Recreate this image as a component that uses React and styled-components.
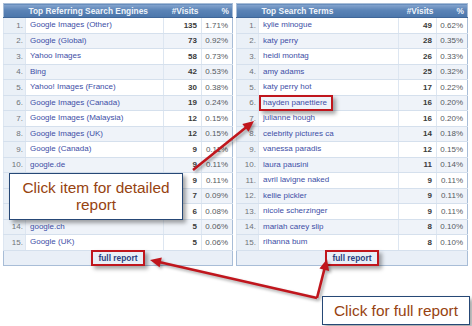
import React from 'react';
import styled, { createGlobalStyle } from 'styled-components';

// rows 11-13 sit under the callout in the screenshot, so their names stay blank
const engines = [
  ['Google Images (Other)', 135, '1.71%'],
  ['Google (Global)', 73, '0.92%'],
  ['Yahoo Images', 58, '0.73%'],
  ['Bing', 42, '0.53%'],
  ['Yahoo! Images (France)', 30, '0.38%'],
  ['Google Images (Canada)', 19, '0.24%'],
  ['Google Images (Malaysia)', 12, '0.15%'],
  ['Google Images (UK)', 12, '0.15%'],
  ['Google (Canada)', 9, '0.11%'],
  ['google.de', 9, '0.11%'],
  ['', 9, '0.11%'],
  ['', 7, '0.09%'],
  ['', 6, '0.08%'],
  ['google.ch', 5, '0.06%'],
  ['Google (UK)', 5, '0.06%'],
];

const terms = [
  ['kylie minogue', 49, '0.62%'],
  ['katy perry', 28, '0.35%'],
  ['heidi montag', 26, '0.33%'],
  ['amy adams', 25, '0.32%'],
  ['katy perry hot', 17, '0.22%'],
  ['hayden panettiere', 16, '0.20%'],
  ['julianne hough', 16, '0.20%'],
  ['celebrity pictures ca', 14, '0.18%'],
  ['vanessa paradis', 12, '0.15%'],
  ['laura pausini', 11, '0.14%'],
  ['avril lavigne naked', 9, '0.11%'],
  ['kellie pickler', 9, '0.11%'],
  ['nicole scherzinger', 9, '0.11%'],
  ['mariah carey slip', 8, '0.10%'],
  ['rihanna bum', 8, '0.10%'],
];

const RED = '#c0161d';

const ReportTable = ({ title, rows, highlightRow }) => (
  <Table>
    <colgroup>
      <col style={{ width: 22 }} />
      <col />
      <col style={{ width: 38 }} />
      <col style={{ width: 31 }} />
    </colgroup>
    <thead>
      <tr>
        <Th />
        <Th $align="left">{title}</Th>
        <Th>#Visits</Th>
        <Th>%</Th>
      </tr>
    </thead>
    <tbody>
      {rows.map(([name, visits, pct], i) => (
        <Row key={i} $odd={i % 2 === 1}>
          <NumCell>{i + 1}.</NumCell>
          <NameCell>
            <ItemLink $marked={i === highlightRow}>{name}</ItemLink>
          </NameCell>
          <VisitsCell>{visits}</VisitsCell>
          <PctCell>{pct}</PctCell>
        </Row>
      ))}
      <tr>
        <FooterCell colSpan={4}>
          <FullReport>full report</FullReport>
        </FooterCell>
      </tr>
    </tbody>
  </Table>
);

const arrowHead = ([x1, y1], [x2, y2], len = 11, half = 5) => {
  const d = Math.hypot(x2 - x1, y2 - y1);
  const ux = (x2 - x1) / d;
  const uy = (y2 - y1) / d;
  const bx = x2 - ux * len;
  const by = y2 - uy * len;
  return `${x2},${y2} ${bx - uy * half},${by + ux * half} ${bx + uy * half},${by - ux * half}`;
};

const Arrow = ({ from, to }) => {
  const d = Math.hypot(to[0] - from[0], to[1] - from[1]);
  const ex = to[0] - ((to[0] - from[0]) / d) * 8;
  const ey = to[1] - ((to[1] - from[1]) / d) * 8;
  return (
    <g>
      <line x1={from[0]} y1={from[1]} x2={ex} y2={ey} stroke={RED} strokeWidth="2.6" />
      <polygon points={arrowHead(from, to)} fill={RED} />
    </g>
  );
};

const App = () => (
  <>
    <GlobalStyle />
    <Page>
      <Tables>
        <ReportTable title="Top Referring Search Engines" rows={engines} />
        <ReportTable title="Top Search Terms" rows={terms} highlightRow={5} />
      </Tables>

      <Arrows width="472" height="326" viewBox="0 0 472 326">
        <Arrow from={[193, 170]} to={[254, 121]} />
        <Arrow from={[317, 298]} to={[150, 260]} />
        <Arrow from={[317, 298]} to={[327, 259]} />
      </Arrows>

      <Callout $left={9} $top={173} $width={174} $height={47} $pad={5}>
        Click item for detailed
        <br />
        report
      </Callout>
      <Callout $left={322} $top={296} $width={148} $height={29} $pad={5}>
        Click for full report
      </Callout>
    </Page>
  </>
);

export default App;

const GlobalStyle = createGlobalStyle`
  body {
    margin: 0;
    background: #ffffff;
    font-family: "Liberation Sans", Arial, sans-serif;
  }
`;

const Page = styled.div`
  position: relative;
  width: 472px;
  height: 326px;
  padding: 3px 4px 0 3px;
  box-sizing: border-box;
`;

const Tables = styled.div`
  display: grid;
  grid-template-columns: 230px 232px;
  gap: 3px;
  align-items: start;
`;

const Table = styled.table`
  width: 100%;
  table-layout: fixed;
  border-collapse: collapse;
  border: 1px solid #a8bdd7;
  font-size: 8px;
`;

const Th = styled.th`
  height: 13px;
  padding: 0 3px;
  text-align: ${({ $align }) => $align || 'right'};
  color: #eef3fa;
  font-size: 8.4px;
  font-weight: bold;
  background: linear-gradient(#86a6cf, #5a83b6 45%, #4b76ab);
  border-bottom: 1px solid #3f6698;
  white-space: nowrap;
`;

const Row = styled.tr`
  background: ${({ $odd }) => ($odd ? '#eff3f9' : '#ffffff')};
  td {
    height: 14.5px;
    border-bottom: 1px solid #d5e0ed;
    border-left: 1px solid #dde6f1;
    white-space: nowrap;
    overflow: visible;
  }
`;

const NumCell = styled.td`
  padding: 0 2px 0 0;
  text-align: right;
  color: #6f7378;
  background: #eaf0f7;
`;

const NameCell = styled.td`
  padding: 0 0 0 4px;
`;

const ItemLink = styled.span`
  display: inline-block;
  color: #3d4ea6;
  line-height: 10px;
  ${({ $marked }) =>
    $marked &&
    `
    padding: 1px 4px 1px 2px;
    margin: -1px -4px -1px -2px;
    box-shadow: 0 0 0 2px ${RED}, 3px 3px 4px 2px rgba(0, 0, 0, 0.35);
  `}
`;

const VisitsCell = styled.td`
  padding: 0 4px 0 0;
  text-align: right;
  font-weight: bold;
  color: #3a3a3a;
`;

const PctCell = styled.td`
  padding: 0 4px 0 0;
  text-align: right;
  color: #55595e;
`;

const FooterCell = styled.td`
  height: 14px;
  padding: 0;
  text-align: center;
  background: #e9eff7;
`;

const FullReport = styled.span`
  display: inline-block;
  padding: 1px 5px;
  line-height: 10px;
  font-size: 8.4px;
  font-weight: bold;
  color: #2c3f80;
  box-shadow: 0 0 0 2px ${RED}, 3px 3px 4px 2px rgba(0, 0, 0, 0.35);
`;

const Arrows = styled.svg`
  position: absolute;
  top: 0;
  left: 0;
  pointer-events: none;
  filter: drop-shadow(2px 2px 1.5px rgba(0, 0, 0, 0.35));
`;

const Callout = styled.div`
  position: absolute;
  left: ${({ $left }) => $left}px;
  top: ${({ $top }) => $top}px;
  width: ${({ $width }) => $width}px;
  height: ${({ $height }) => $height}px;
  padding-top: ${({ $pad }) => $pad}px;
  box-sizing: border-box;
  background: #ffffff;
  border: 1px solid #264876;
  box-shadow: 3px 3px 4px rgba(0, 0, 0, 0.35);
  color: #974310;
  font-size: 15.4px;
  line-height: 17px;
  text-align: center;
`;
